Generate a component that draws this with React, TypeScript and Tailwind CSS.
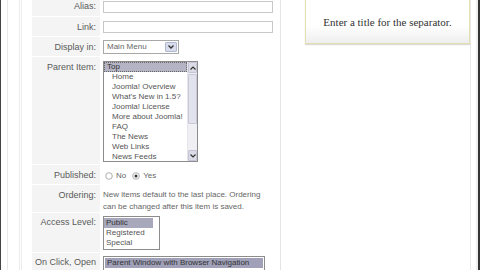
import React from "react";

const lbl = "flex justify-end pr-[4px] text-[9px] leading-[12px] text-[#5a5a5a] bg-[#f4f4f4] border-b border-white w-[68px] whitespace-nowrap";

function ScrollBar() {
  return (
    <div className="w-[10px] h-full flex flex-col bg-[#f0f0f4] border-l border-[#e4e4ea]">
      <div className="h-[11px] bg-[#dcdce8] border border-[#c4c4d4] rounded-[1px] flex items-center justify-center">
        <svg width="6" height="4" viewBox="0 0 6 4"><path d="M0.5 3.5 L3 1 L5.5 3.5" stroke="#333" strokeWidth="1.2" fill="none" /></svg>
      </div>
      <div className="flex-1 pt-[1px]">
        <div className="h-[50px] bg-[#e2e2ec] border border-[#c8c8d8] rounded-[1px]" />
      </div>
      <div className="h-[11px] bg-[#dcdce8] border border-[#c4c4d4] rounded-[1px] flex items-center justify-center">
        <svg width="6" height="4" viewBox="0 0 6 4"><path d="M0.5 0.5 L3 3 L5.5 0.5" stroke="#333" strokeWidth="1.2" fill="none" /></svg>
      </div>
    </div>
  );
}

function Radio({ checked }: { checked?: boolean }) {
  return (
    <svg width="8" height="8" viewBox="0 0 8 8">
      <circle cx="4" cy="4" r="3.3" fill="white" stroke="#9a9a9a" strokeWidth="0.8" />
      {checked && <circle cx="4" cy="4" r="1.5" fill="#333" />}
    </svg>
  );
}

export default function App() {
  const parentItems = [
    "Home",
    "Joomla! Overview",
    "What's New in 1.5?",
    "Joomla! License",
    "More about Joomla!",
    "FAQ",
    "The News",
    "Web Links",
    "News Feeds",
  ];
  return (
    <div
      className="w-[480px] h-[270px] overflow-hidden bg-white flex"
      style={{ fontFamily: '"Liberation Sans", Arial, sans-serif' }}
    >
      {/* left frame */}
      <div className="w-[1px] bg-[#444]" />
      <div className="w-[6px] bg-white" />
      <div className="w-[1px] bg-[#e8e8e8]" />
      <div className="w-[11px] bg-white" />
      <div className="w-[1px] bg-[#ececec]" />
      <div className="w-[1px] bg-white" />
      <div className="w-[1px] bg-[#ececec]" />
      <div className="w-[10px] bg-white" />

      {/* form */}
      <div className="w-[248px] flex flex-col">
        {/* Alias */}
        <div className="flex h-[17px] shrink-0">
          <div className={`${lbl} items-start pt-[0px]`}>Alias:</div>
          <div className="flex-1 pl-[3px] pt-[1px]">
            <div className="w-[170px] h-[12px] border border-[#c8c8c8] bg-white" />
          </div>
        </div>
        {/* Link */}
        <div className="flex h-[20px] shrink-0">
          <div className={`${lbl} items-start pt-[4px]`}>Link:</div>
          <div className="flex-1 pl-[3px] pt-[4px]">
            <div className="w-[170px] h-[12px] border border-[#c8c8c8] bg-white" />
          </div>
        </div>
        {/* Display in */}
        <div className="flex h-[20px] shrink-0">
          <div className={`${lbl} items-start pt-[4px]`}>Display in:</div>
          <div className="flex-1 pl-[3px] pt-[3px]">
            <div className="w-[76px] h-[14px] border border-[#a8a8a8] bg-white flex">
              <div className="flex-1 text-[8px] text-[#666] pl-[3px] leading-[12px]">Main Menu</div>
              <div className="w-[12px] m-[1px] bg-[#d8dcec] border border-[#b0b8d0] rounded-[1px] flex items-center justify-center">
                <svg width="6" height="4" viewBox="0 0 6 4"><path d="M0.5 0.5 L3 3 L5.5 0.5" stroke="#333" strokeWidth="1.3" fill="none" /></svg>
              </div>
            </div>
          </div>
        </div>
        {/* Parent item */}
        <div className="flex h-[108px] shrink-0">
          <div className={`${lbl} items-start pt-[4px]`}>Parent Item:</div>
          <div className="flex-1 pl-[3px] pt-[4px]">
            <div className="w-[95px] h-[101px] border border-[#8c8c8c] bg-white flex">
              <div className="flex-1 flex flex-col text-[8px] text-[#555] leading-[10px] overflow-hidden">
                <div className="bg-[#b4b4c4] text-[#333] pl-[2px] h-[10px] leading-[8px] border border-dotted border-[#666]">Top</div>
                {parentItems.map((t) => (
                  <div key={t} className="pl-[8px] whitespace-nowrap">{t}</div>
                ))}
              </div>
              <ScrollBar />
            </div>
          </div>
        </div>
        {/* Published */}
        <div className="flex h-[20px] shrink-0">
          <div className={`${lbl} items-start pt-[4px]`}>Published:</div>
          <div className="flex-1 pl-[5px] flex items-center gap-[3px] text-[8px] text-[#666] pt-[2px]">
            <Radio />
            <span className="mr-[3px]">No</span>
            <Radio checked />
            <span>Yes</span>
          </div>
        </div>
        {/* Ordering */}
        <div className="flex h-[28px] shrink-0">
          <div className={`${lbl} items-start pt-[4px]`}>Ordering:</div>
          <div className="flex-1 pl-[3px] pt-[4px] text-[8px] text-[#666] leading-[12px] whitespace-nowrap">
            New items default to the last place. Ordering
            <br />
            can be changed after this item is saved.
          </div>
        </div>
        {/* Access level */}
        <div className="flex h-[40px] shrink-0">
          <div className={`${lbl} items-start pt-[3px]`}>Access Level:</div>
          <div className="flex-1 pl-[3px] pt-[3px]">
            <div className="w-[57px] h-[34px] border border-[#8c8c8c] bg-white flex flex-col text-[8px] text-[#555] leading-[10px] pt-[1px]">
              <div className="bg-[#a8a8bc] text-[#333] pl-[2px] mr-[6px]">Public</div>
              <div className="pl-[2px]">Registered</div>
              <div className="pl-[2px]">Special</div>
            </div>
          </div>
        </div>
        {/* On Click */}
        <div className="flex h-[30px] shrink-0">
          <div className={`${lbl} items-start pt-[3px]`}>On Click, Open</div>
          <div className="flex-1 pl-[3px] pt-[3px]">
            <div className="w-[162px] h-[20px] border border-[#8c8c8c] bg-white p-[1px] text-[8px] leading-[10px]">
              <div className="bg-[#a0a0b8] text-[#333] pl-[2px] whitespace-nowrap">Parent Window with Browser Navigation</div>
            </div>
          </div>
        </div>
      </div>

      <div className="w-[1px] bg-[#e4e4e4]" />
      <div className="w-[24px] bg-white" />

      {/* right panel */}
      <div className="w-[165px] flex flex-col">
        <div className="h-[44px] border border-t-0 border-[#e4e0b0] bg-gradient-to-b from-white from-60% to-[#eeeef0] flex items-center justify-center shadow-[0_1px_1px_rgba(0,0,0,0.15)]">
          <span
            className="text-[11px] text-[#333] pt-[1px] whitespace-nowrap"
            style={{ fontFamily: '"Liberation Serif", "Times New Roman", serif' }}
          >
            Enter a title for the separator.
          </span>
        </div>
      </div>

      <div className="w-[1px] bg-[#e8e8e8]" />
      <div className="w-[1px] bg-white" />
      <div className="flex-1 bg-white" />
      <div className="w-[2px] bg-[#eee]" />
      <div className="w-[2px] bg-[#333]" />
    </div>
  );
}
